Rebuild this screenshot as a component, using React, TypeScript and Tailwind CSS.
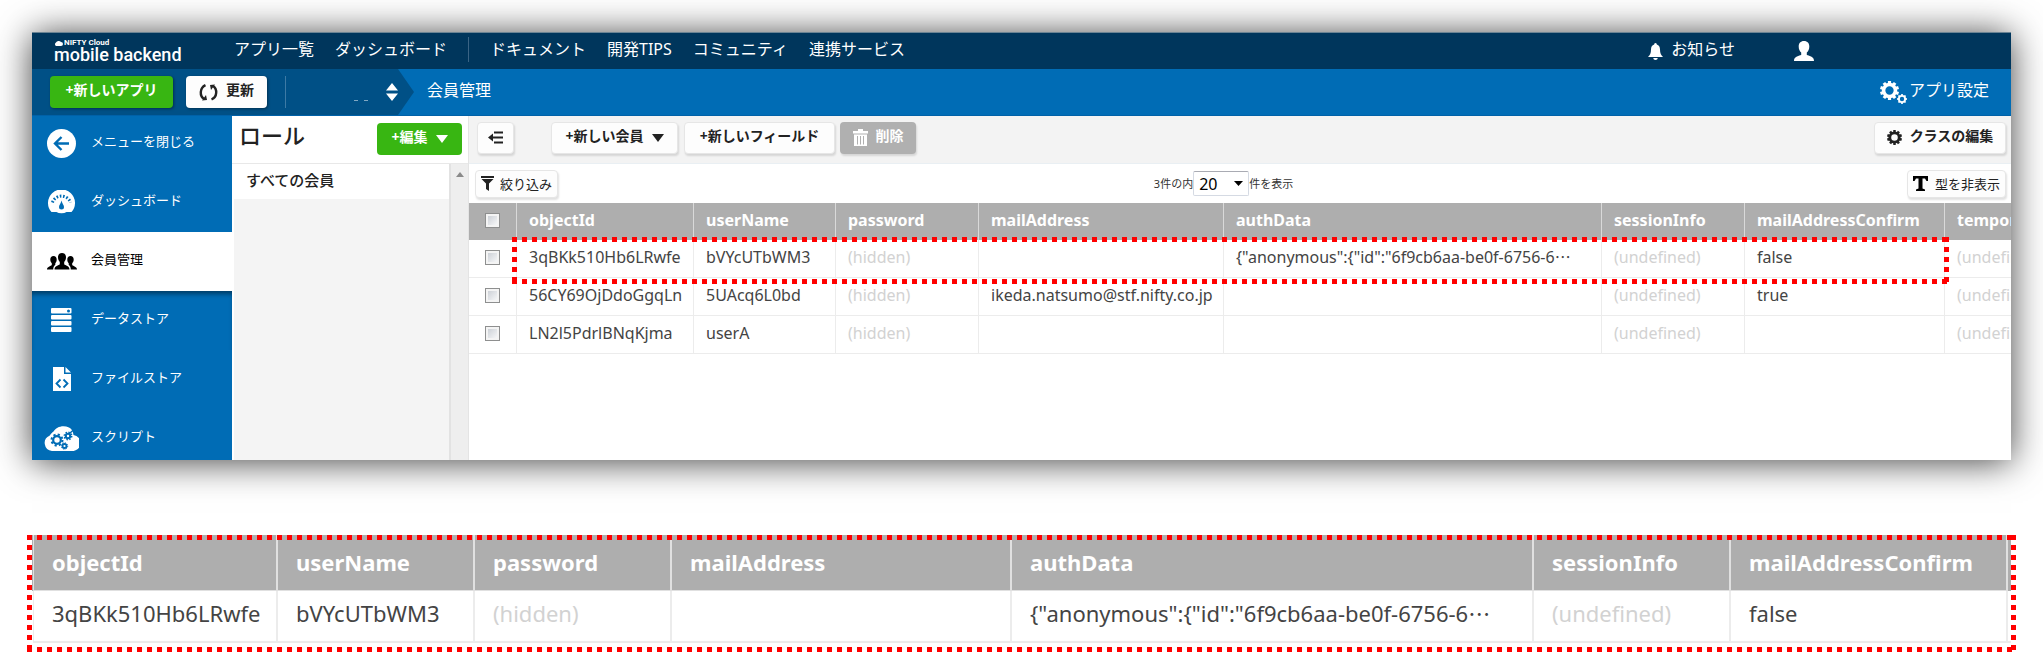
import type { ReactNode } from "react";

function Dots({ className }: { className: string }) {
  return (
    <div aria-hidden="true" className={`pointer-events-none absolute ${className}`}>
      <div className="absolute inset-x-0 top-0 h-[5px] bg-[repeating-linear-gradient(90deg,#ff0000_0_5px,transparent_5px_10px)]" />
      <div className="absolute inset-x-0 bottom-0 h-[5px] bg-[repeating-linear-gradient(90deg,#ff0000_0_5px,transparent_5px_10px)]" />
      <div className="absolute inset-y-0 left-0 w-[5px] bg-[repeating-linear-gradient(180deg,#ff0000_0_5px,transparent_5px_10px)]" />
      <div className="absolute inset-y-0 right-0 w-[5px] bg-[repeating-linear-gradient(180deg,#ff0000_0_5px,transparent_5px_10px)]" />
    </div>
  );
}

function Gear({ size, teeth = 10 }: { size: number; teeth?: number }) {
  const step = 360 / teeth;
  return (
    <svg width={size} height={size} viewBox="0 0 24 24" fill="none" stroke="currentColor" aria-hidden="true">
      <circle cx="12" cy="12" r="7.500" strokeWidth="4.500" />
      {Array.from({ length: teeth }, (_, i) => (
        <rect key={i} x="10" y="0" width="4" height="4" fill="currentColor" stroke="none" transform={`rotate(${i * step} 12 12)`} />
      ))}
    </svg>
  );
}

function Caret() {
  return (
    <svg width="12" height="8" viewBox="0 0 12 8" fill="currentColor" aria-hidden="true">
      <path d="M0 0h12L6 8z" />
    </svg>
  );
}

function BackIcon() {
  return (
    <svg width="29" height="29" viewBox="0 0 29 29" aria-hidden="true">
      <circle cx="14.500" cy="14.500" r="14.500" fill="#fff" />
      <path d="M22 14.500H8.500M14.500 8L8 14.500l6.500 6.500" fill="none" stroke="#006cb5" strokeWidth="2.400" />
    </svg>
  );
}

function GaugeIcon() {
  return (
    <svg width="27" height="25" viewBox="0 0 27 25" aria-hidden="true">
      <path d="M3.500 22A13.500 13.500 0 1 1 23.500 22H18.500a6 3 0 0 1-10 0z" fill="#fff" />
      <path d="M4.500 12.500A9.500 9.500 0 0 1 22.500 12.500" fill="none" stroke="#006cb5" strokeWidth="3" strokeDasharray="1.600 1.700" />
      <path d="M13.500 10.500c.6 3 2.500 4.500 2.500 6.500a2.500 2.500 0 0 1-5 0c0-2 1.900-3.500 2.500-6.500z" fill="#006cb5" />
    </svg>
  );
}

function UsersIcon() {
  return (
    <svg width="30" height="17" viewBox="0 0 30 17" fill="#000" aria-hidden="true">
      <path d="M15 0c2.600 0 4 1.800 4 4.300 0 2.200-.8 3.700-1.800 4.700v2.200c1 1.100 5.300 1.500 5.300 5.300h-15c0-3.800 4.300-4.200 5.300-5.300V9C11.800 8 11 6.500 11 4.300 11 1.800 12.400 0 15 0z" />
      <path d="M6.500 3c2 0 3.200 1.400 3.200 3.500 0 1.700-.6 3-1.400 3.800v1.500C6.800 13 6.300 14.500 6.200 16.500H0c0-3 3.700-3.400 4.800-4.600v-1.600C4 9.500 3.300 8.200 3.300 6.500 3.300 4.400 4.500 3 6.500 3z" />
      <path d="M23.500 3c-2 0-3.200 1.400-3.200 3.500 0 1.700.6 3 1.400 3.800v1.500c1.500 1.200 2 2.700 2.100 4.700H30c0-3-3.700-3.400-4.800-4.600v-1.600c.8-.8 1.500-2.100 1.500-3.800C26.700 4.400 25.500 3 23.500 3z" />
    </svg>
  );
}

function ServerIcon() {
  return (
    <svg width="21" height="24" viewBox="0 0 21 24" fill="#fff" aria-hidden="true">
      <rect width="20.500" height="5.500" rx="1" />
      <rect y="7" width="20.500" height="4.500" rx="1" />
      <rect y="13" width="20.500" height="4.500" rx="1" />
      <rect y="19" width="20.500" height="5" rx="1" />
      <circle cx="17.500" cy="3" r="1.500" fill="#006cb5" />
    </svg>
  );
}

function FileIcon() {
  return (
    <svg width="18" height="24" viewBox="0 0 18 24" aria-hidden="true">
      <path d="M0 0h11v7h7v17H0zM12.500 0L18 5.500h-5.500z" fill="#fff" />
      <path d="M7.500 12.500L3.500 16.500l4 4M10.500 12.500l4 4-4 4" fill="none" stroke="#006cb5" strokeWidth="1.800" />
    </svg>
  );
}

function ScriptIcon() {
  return (
    <svg width="35" height="25" viewBox="0 0 35 25" aria-hidden="true">
      <path d="M8 25a8 8 0 0 1-2.500-15.300C7 8 7.500 7 9.500 5.500 12 1 19 -1.500 25 1.500c3 1.500 4 4 4.500 7.500A8 8 0 0 1 27.500 25z" fill="#fff" />
      <g fill="none" stroke="#006cb5">
        <circle cx="13" cy="14" r="3.800" strokeWidth="2.200" />
        <circle cx="13" cy="14" r="5.500" strokeWidth="2" strokeDasharray="2.200 2.120" />
        <circle cx="24" cy="10" r="2.200" strokeWidth="2" />
        <circle cx="24" cy="10" r="3.700" strokeWidth="1.500" strokeDasharray="1.500 1.400" />
        <circle cx="20.500" cy="20" r="2" strokeWidth="1.800" />
        <circle cx="20.500" cy="20" r="3.200" strokeWidth="1" strokeDasharray="1.300 1.200" />
      </g>
      <path d="M25 8l6-5.500" stroke="#006cb5" strokeWidth="1.500" />
    </svg>
  );
}

const menu: { label: string; icon: ReactNode; active?: boolean }[] = [
  { label: "メニューを閉じる", icon: <BackIcon /> },
  { label: "ダッシュボード", icon: <GaugeIcon /> },
  { label: "会員管理", icon: <UsersIcon />, active: true },
  { label: "データストア", icon: <ServerIcon /> },
  { label: "ファイルストア", icon: <FileIcon /> },
  { label: "スクリプト", icon: <ScriptIcon /> },
];

const fields = ["objectId", "userName", "password", "mailAddress", "authData", "sessionInfo", "mailAddressConfirm"];
const auth = '{"anonymous":{"id":"6f9cb6aa-be0f-6756-6…';
const rows = [
  ["3qBKk510Hb6LRwfe", "bVYcUTbWM3", "(hidden)", "", auth, "(undefined)", "false", "(undefined)"],
  ["56CY69OjDdoGgqLn", "5UAcq6L0bd", "(hidden)", "ikeda.natsumo@stf.nifty.co.jp", "", "(undefined)", "true", "(undefined)"],
  ["LN2l5PdrlBNqKjma", "userA", "(hidden)", "", "", "(undefined)", "", "(undefined)"],
];

const tone = (text: string) => (text.startsWith("(") ? "text-[#d2d2d2]" : "text-[#444444]");
const whiteButton =
  "flex items-center justify-center rounded border border-[#e6e6e6] bg-[#fdfdfd] text-[#222222] shadow-[1px_2px_2px_rgba(0,0,0,0.12)]";

function Value({ text }: { text: string }) {
  if (!text.endsWith("…")) return <>{text}</>;
  return (
    <>
      {text.slice(0, -1)}
      <span lang="ja" className="font-['Noto_Sans_CJK_JP',sans-serif] leading-none">…</span>
    </>
  );
}

function Check({ label }: { label: string }) {
  return (
    <input
      type="checkbox"
      aria-label={label}
      className="block size-[15px] appearance-none border border-[#8e8f8f] bg-linear-to-br from-[#c4c9d0] to-white shadow-[inset_0_0_0_2px_#f4f4f4]"
    />
  );
}

function TopBar() {
  const link = "whitespace-nowrap";
  return (
    <header className="flex h-[36px] items-center bg-[#00365c] pb-1 text-base leading-5 text-white">
      <a href="#" className="ml-[22px] flex w-[180px] flex-col pt-1 font-[Roboto,sans-serif]">
        <span className="flex items-center gap-px text-[8px] leading-[7px] font-bold">
          <svg width="9" height="6" viewBox="0 0 9 6" fill="currentColor" aria-hidden="true">
            <path d="M2 6a2 2 0 0 1 0-3.500A3 2.500 0 0 1 7 2a2 2 0 0 1 0 4z" />
          </svg>
          NIFTY Cloud
        </span>
        <span className="text-lg leading-[17px] font-medium">mobile backend</span>
      </a>
      <nav className="flex items-center gap-[21px]">
        <a href="#" className={link}>アプリ一覧</a>
        <a href="#" className={link}>ダッシュボード</a>
        <span className="h-[25px] w-px bg-[#3a6485]" />
        <a href="#" className={link}>ドキュメント</a>
        <a href="#" className={link}>開発TIPS</a>
        <a href="#" className={link}>コミュニティ</a>
        <a href="#" className={link}>連携サービス</a>
      </nav>
      <div className="mr-[197px] ml-auto flex items-center">
        <a href="#" className="flex items-center gap-2 whitespace-nowrap">
          <svg width="15" height="17" viewBox="0 0 15 17" fill="currentColor" className="mt-1" aria-hidden="true">
            <path d="M7.500 0c1 0 1.300.8 1.300 1.500C11 2.200 12 4 12 6.500c0 4 1 5.500 3 7.500H0c2-2 3-3.500 3-7.500C3 4 4 2.200 6.200 1.500 6.200.8 6.500 0 7.500 0zM5.300 15h4.400c0 1.200-.9 2-2.200 2s-2.200-.8-2.200-2z" />
          </svg>
          お知らせ
        </a>
        <a href="#" aria-label="アカウント" className="ml-[59px]">
          <svg width="20" height="20" viewBox="0 0 20 20" fill="currentColor" className="mt-1" aria-hidden="true">
            <path d="M10 0c3.500 0 5.300 2.300 5.300 5.500 0 2.700-1 4.700-2.500 6V14c3 1 7.200 1.500 7.200 6H0c0-4.500 4.200-5 7.200-6v-2.500c-1.500-1.300-2.500-3.300-2.500-6C4.700 2.300 6.500 0 10 0z" />
          </svg>
        </a>
      </div>
    </header>
  );
}

function AppBar() {
  return (
    <div className="flex h-[47px] items-stretch border-b border-[#0061a8] bg-[#006cb5] text-white">
      <div className="flex w-[366px] shrink-0 items-center bg-[#005086] pl-[18px]">
        <button className="h-8 w-[123px] rounded bg-[#38b612] pb-1 text-sm font-bold shadow-[1px_1px_3px_rgba(0,0,0,0.4)]">+新しいアプリ</button>
        <button className="ml-[13px] flex h-8 w-[81px] items-center justify-center gap-2 rounded bg-[#fdfdfd] text-sm font-bold text-[#222222] shadow-[1px_1px_3px_rgba(0,0,0,0.4)]">
          <svg width="19" height="17" viewBox="0 0 19 17" fill="none" stroke="currentColor" strokeWidth="2.400" aria-hidden="true">
            <path d="M6.500 1.200C.5 4 .5 12 5 15M12.500 15.500c6-2.500 6-10.500 1.500-13.500" />
            <path d="M3 16.500l5-.5-1-5zM16 .5l-5 .5 1 5z" fill="currentColor" stroke="none" transform="rotate(0 9.500 8.500)" />
          </svg>
          <span className="pb-1">更新</span>
        </button>
        <span className="ml-[18px] h-8 w-px bg-[#3d7aa5]" />
        <button aria-label="アプリを選択" className="ml-auto flex items-end gap-[18px]">
          <span className="flex gap-[6px]">
            <i className="h-px w-[4px] bg-white/50" />
            <i className="h-px w-[4px] bg-white/50" />
          </span>
          <svg width="12" height="18" viewBox="0 0 12 18" fill="#fff" aria-hidden="true">
            <path d="M0 7.500h12L6 0zM0 10.500h12L6 18z" />
          </svg>
        </button>
      </div>
      <svg width="16" height="46" viewBox="0 0 16 46" fill="#005086" aria-hidden="true">
        <path d="M0 0l16 23L0 46z" />
      </svg>
      <span className="self-center pb-1 pl-[13px] text-base leading-5">会員管理</span>
      <a href="#" className="mr-[22px] ml-auto flex items-center gap-[2px] pb-1 text-base leading-5">
        <span className="flex items-end">
          <Gear size={19} />
          <span className="-mb-[4px] -ml-[2px]"><Gear size={10} teeth={8} /></span>
        </span>
        <span>アプリ設定</span>
      </a>
    </div>
  );
}

function SideMenu() {
  return (
    <nav className="w-[200px] shrink-0 overflow-hidden bg-[#006cb5] text-[13px] leading-5 text-white">
      <ul className="-mt-[2px] -mb-2">
        {menu.map((item, i) => (
          <li key={item.label}>
            <a
              href="#"
              className={`flex h-[59px] items-center pb-px ${
                item.active ? "bg-white text-black" : i === 3 ? "shadow-[inset_0_5px_5px_-2px_rgba(0,0,0,0.45)]" : ""
              }`}
            >
              <span className="flex w-[59px] justify-center">{item.icon}</span>
              <span className="pb-1">{item.label}</span>
            </a>
          </li>
        ))}
      </ul>
    </nav>
  );
}

function RolePanel() {
  return (
    <section className="flex w-[237px] shrink-0 flex-col border-r border-[#e4e4e4] bg-white">
      <div className="flex h-[48px] items-center justify-between border-b border-[#e8e8e8] pr-[6px] pb-[2px] pl-[7px]">
        <h2 className="pb-2 text-[22px] leading-7 font-medium text-[#222222]">ロール</h2>
        <button className="flex h-8 w-[85px] items-center justify-center gap-2 rounded bg-[#38b612] text-sm font-bold text-white">
          <span className="pb-1">+編集</span>
          <Caret />
        </button>
      </div>
      <div className="flex flex-1">
        <div className="flex-1 border-l-2 border-white bg-[#f4f4f4]">
          <a href="#" className="block h-[35px] bg-white pl-[12px] text-[15px] leading-8 font-medium text-[#222222]">すべての会員</a>
        </div>
        <div className="flex w-[19px] justify-center border-l-2 border-[#e2e2e2] bg-[#eeeeee] pt-2">
          <svg width="8" height="5" viewBox="0 0 8 5" fill="#8a8a8a" aria-hidden="true">
            <path d="M4 0l4 5H0z" />
          </svg>
        </div>
      </div>
    </section>
  );
}

function Toolbar() {
  return (
    <div className="flex h-[48px] items-center border-b border-[#e9eff3] bg-[#f3f3f3] pr-[5px] pb-1 pl-2 text-sm font-bold whitespace-nowrap">
      <button aria-label="リストを閉じる" className={`${whiteButton} h-8 w-[37px]`}>
        <svg width="15" height="13" viewBox="0 0 15 13" fill="none" stroke="currentColor" strokeWidth="2.200" aria-hidden="true">
          <path d="M6 1.500h9M2 6.500h13M6 11.500h9" />
          <path d="M5 2.500v8L0 6.500z" fill="currentColor" stroke="none" />
        </svg>
      </button>
      <button className={`${whiteButton} ml-[37px] h-8 w-[127px] gap-2`}>
        <span className="pb-1">+新しい会員</span>
        <Caret />
      </button>
      <button className={`${whiteButton} ml-[6px] h-8 w-[151px]`}>
        <span className="pb-1">+新しいフィールド</span>
      </button>
      <button className="ml-[5px] flex h-8 w-[76px] items-center justify-center gap-2 rounded bg-[#b0b0b0] text-white shadow-[1px_2px_2px_rgba(0,0,0,0.12)]">
        <svg width="15" height="17" viewBox="0 0 15 17" fill="currentColor" aria-hidden="true">
          <path d="M0 2h5V0h5v2h5v2.500H0zM1 5.500h13V17H1z" />
          <path d="M4.500 7v8.500M7.500 7v8.500M10.500 7v8.500" stroke="#b0b0b0" />
        </svg>
        <span className="pb-1">削除</span>
      </button>
      <button className={`${whiteButton} ml-auto h-8 w-[132px] gap-2`}>
        <Gear size={15} />
        <span className="pb-1">クラスの編集</span>
      </button>
    </div>
  );
}

function FilterBar() {
  return (
    <div className="flex h-[39px] items-center pr-[5px] pl-[6px] text-[13px] leading-5 whitespace-nowrap text-[#333333]">
      <div className="flex flex-1">
        <button className={`${whiteButton} h-7 w-[83px] gap-[6px]`}>
          <svg width="13" height="15" viewBox="0 0 13 15" fill="currentColor" aria-hidden="true">
            <path d="M0 0h13v2H0zM.5 3h12L8 7.500V15L5 13V7.500z" />
          </svg>
          絞り込み
        </button>
      </div>
      <label className="mr-[34px] flex items-center text-[11px]">
        3件の内
        <span className="relative">
          <select defaultValue="20" className="block h-[25px] w-[56px] appearance-none rounded-xs border border-[#d5dae3] border-t-[#a9abb3] bg-white pl-[5px] text-base leading-5 text-black">
            <option>20</option>
            <option>50</option>
          </select>
          <svg width="9" height="5" viewBox="0 0 9 5" className="pointer-events-none absolute top-[10px] right-[6px]" aria-hidden="true">
            <path d="M0 0h9L4.500 5z" />
          </svg>
        </span>
        件を表示
      </label>
      <div className="flex flex-1 justify-end">
        <button className={`${whiteButton} h-7 w-[99px] gap-[7px]`}>
          <svg width="15" height="15" viewBox="0 0 15 15" fill="#000" aria-hidden="true">
            <path d="M0 0h15v5h-1.500L12 2.500H9.500v10L12 13.500V15H3v-1.500l2.500-1v-10H3L1.500 5H0z" />
          </svg>
          型を非表示
        </button>
      </div>
    </div>
  );
}

function MembersTable() {
  const widths = ["w-[48px]", "w-[177px]", "w-[142px]", "w-[143px]", "w-[245px]", "w-[378px]", "w-[143px]", "w-[200px]", "w-[142px]"];
  return (
    <div className="relative">
      <table className="w-[1618px] table-fixed border-separate border-spacing-0 text-left text-base leading-5 whitespace-nowrap">
        <colgroup>
          {widths.map((w, i) => (
            <col key={i} className={w} />
          ))}
        </colgroup>
        <thead className="bg-[#aeaeae] text-white">
          <tr className="h-[37px]">
            <th className="border-r border-[#d9d9d9] pb-[2px] pl-4"><Check label="すべて選択" /></th>
            {[...fields, "temporaryPassword"].map((f) => (
              <th key={f} className="border-r border-[#d9d9d9] pb-1 pl-3 font-bold">{f}</th>
            ))}
          </tr>
        </thead>
        <tbody>
          {rows.map((row) => (
            <tr key={row[0]} className="h-[38px]">
              <td className="border-r border-b border-[#ececec] pb-[2px] pl-4"><Check label={row[0]} /></td>
              {row.map((text, i) => (
                <td key={i} className={`border-r border-b border-[#ececec] pb-1 pl-3 ${tone(text)}`}><Value text={text} /></td>
              ))}
            </tr>
          ))}
        </tbody>
      </table>
      <Dots className="top-[34px] left-[43px] h-[47px] w-[1437px]" />
    </div>
  );
}

function DetailTable() {
  const widths = ["w-[2px]", "w-[244px]", "w-[197px]", "w-[197px]", "w-[340px]", "w-[522px]", "w-[197px]", "w-[277px]", "w-auto"];
  return (
    <section className="relative mx-[27px] mt-[75px] px-[5px] pb-[9px]">
      <table className="w-full table-fixed border-separate border-spacing-0 text-left text-[22px] leading-7 whitespace-nowrap">
        <colgroup>
          {widths.map((w, i) => (
            <col key={i} className={w} />
          ))}
        </colgroup>
        <thead className="bg-[#aeaeae] text-white">
          <tr className="h-[56px]">
            <td className="border-r border-[#e0e0e0]" />
            {fields.map((f) => (
              <th key={f} className="border-r-2 border-b border-[#e0e0e0] pb-[2px] pl-[18px] font-bold">{f}</th>
            ))}
            <td />
          </tr>
        </thead>
        <tbody>
          <tr className="h-[52px]">
            <td className="border-r border-[#ececec]" />
            {rows[0].slice(0, 7).map((text, i) => (
              <td key={i} className={`border-r-2 border-b-2 border-[#ececec] pb-[6px] pl-[18px] ${tone(text)}`}><Value text={text} /></td>
            ))}
            <td className="border-b-2 border-[#ececec]" />
          </tr>
        </tbody>
      </table>
      <Dots className="inset-0" />
    </section>
  );
}

export default function App() {
  return (
    <div className="flow-root bg-white font-['Noto_Sans','Noto_Sans_CJK_JP',sans-serif]">
      <main className="mx-8 mt-8 overflow-hidden border-t border-[#6b8494] shadow-[0_2px_34px_rgba(0,0,0,0.75)]">
        <TopBar />
        <AppBar />
        <div className="flex bg-white">
          <SideMenu />
          <RolePanel />
          <section className="min-w-0 flex-1 overflow-hidden">
            <Toolbar />
            <FilterBar />
            <MembersTable />
          </section>
        </div>
      </main>
      <DetailTable />
    </div>
  );
}
